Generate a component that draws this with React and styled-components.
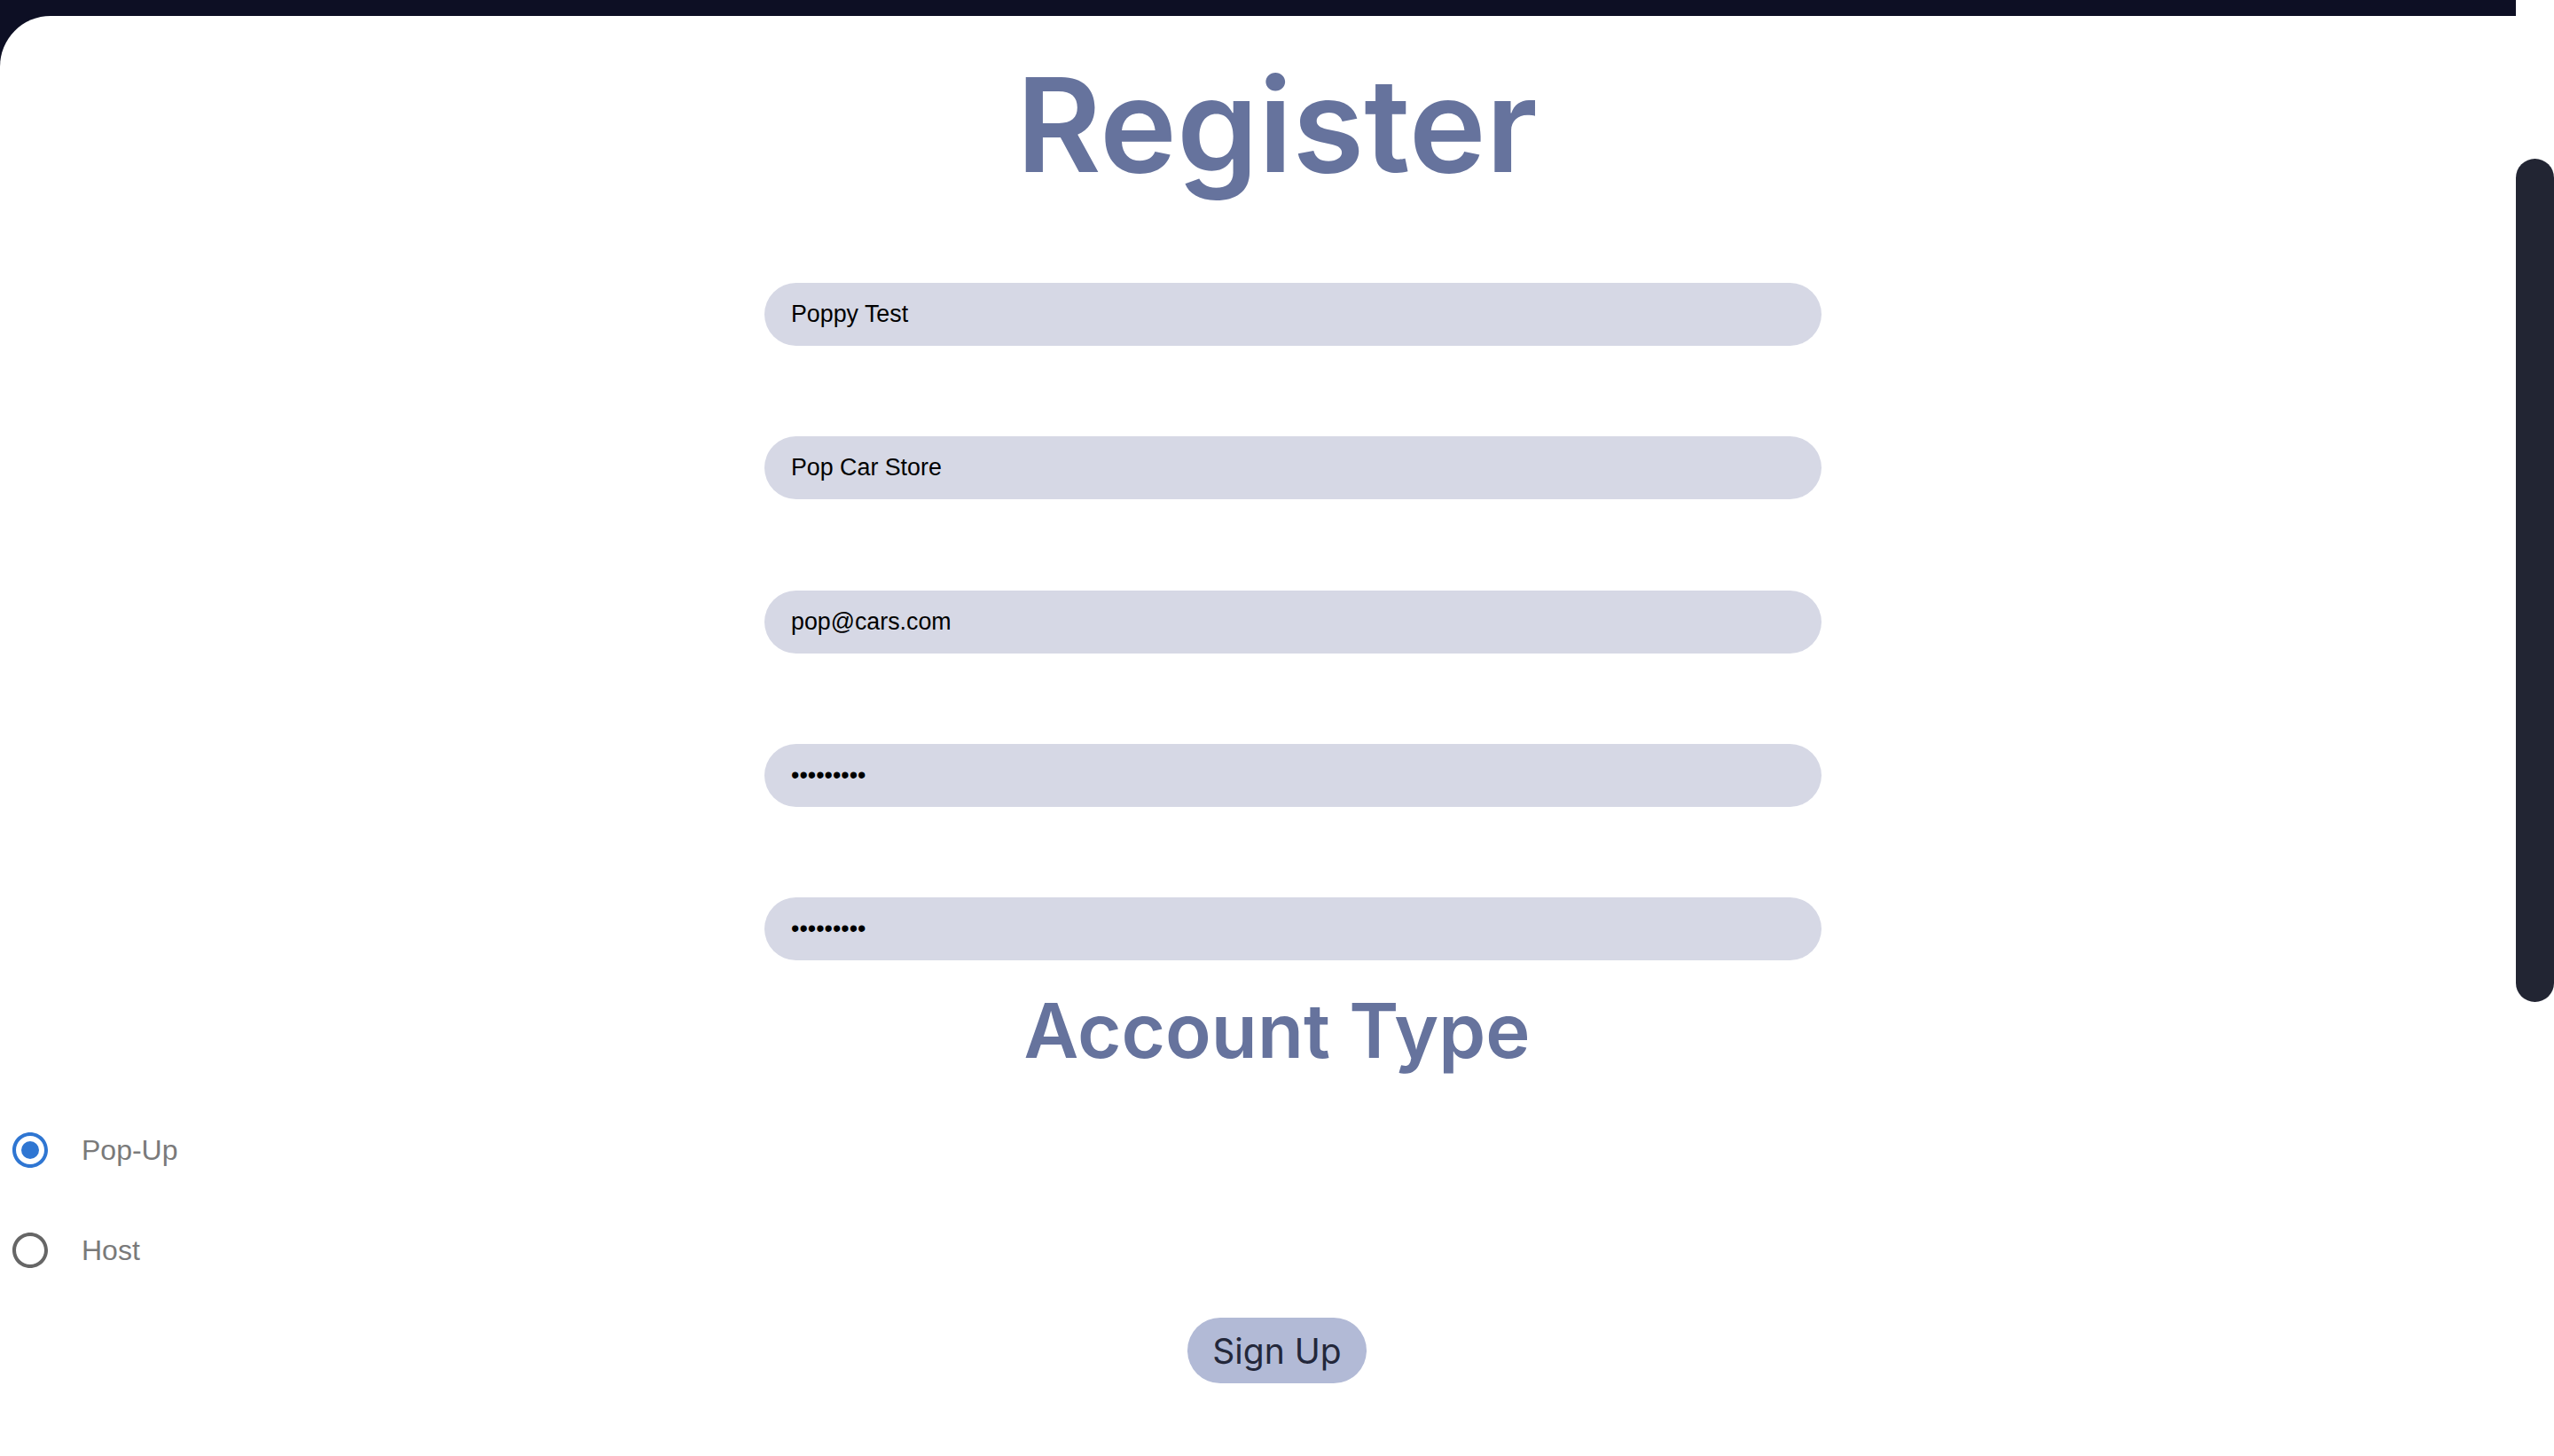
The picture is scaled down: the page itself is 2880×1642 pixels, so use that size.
import React, { useState } from 'react';
import styled, { createGlobalStyle } from 'styled-components';

const GlobalStyle = createGlobalStyle`
  html, body {
    margin: 0;
    padding: 0;
    background: #ffffff;
  }
  * {
    box-sizing: border-box;
  }
`;

const Register = () => {
  const [accountType, setAccountType] = useState('popup');

  return (
    <Frame>
      <GlobalStyle />
      <Main>
        <Card>
          <Title>Register</Title>

          <Form>
            <Field type="text" defaultValue="Poppy Test" />
            <Field type="text" defaultValue="Pop Car Store" />
            <Field type="email" defaultValue="pop@cars.com" />
            <Field type="password" defaultValue="password1" />
            <Field type="password" defaultValue="password1" />
          </Form>

          <Subtitle>Account Type</Subtitle>

          <RadioGroup>
            <RadioRow onClick={() => setAccountType('popup')}>
              <RadioIcon checked={accountType === 'popup'} />
              <RadioLabel>Pop-Up</RadioLabel>
            </RadioRow>
            <RadioRow onClick={() => setAccountType('host')}>
              <RadioIcon checked={accountType === 'host'} />
              <RadioLabel>Host</RadioLabel>
            </RadioRow>
          </RadioGroup>

          <SignUpButton>Sign Up</SignUpButton>
        </Card>
      </Main>

      <Rail>
        <Thumb />
      </Rail>
    </Frame>
  );
};

// material style radio icon
const RadioIcon = ({ checked }) => (
  <IconBox>
    <svg width="48" height="48" viewBox="0 0 24 24" fill={checked ? '#2f76d2' : '#666666'}>
      <path d="M12 2C6.48 2 2 6.48 2 12s4.48 10 10 10 10-4.48 10-10S17.52 2 12 2zm0 18c-4.42 0-8-3.58-8-8s3.58-8 8-8 8 3.58 8 8-3.58 8-8 8z" />
      {checked && <circle cx="12" cy="12" r="5" />}
    </svg>
  </IconBox>
);

export default Register;

// Styled Components
const Frame = styled.div`
  display: flex;
  width: 2880px;
  height: 1642px;
  background: #ffffff;
  overflow: hidden;
`;

const Main = styled.div`
  flex: 1;
  display: flex;
  flex-direction: column;
  background: #0d0f24;
`;

const Card = styled.div`
  flex: 1;
  margin-top: 18px;
  padding-left: 43px;
  display: flex;
  flex-direction: column;
  align-items: center;
  background: #ffffff;
  border-top-left-radius: 57px;
`;

const Title = styled.h1`
  margin: 50px 0 0 0;
  font-family: Inter, "Liberation Sans", sans-serif;
  font-size: 147px;
  line-height: 146px;
  font-weight: 600;
  color: #66739d;
`;

const Form = styled.div`
  display: flex;
  flex-direction: column;
  gap: 102.25px;
  width: 1192px;
  margin-top: 105px;
  margin-left: 36px;
`;

const Field = styled.input`
  height: 71px;
  width: 100%;
  padding: 0 30px;
  border: none;
  outline: none;
  border-radius: 36px;
  background: #d6d8e5;
  font-family: "Liberation Sans", Arial, sans-serif;
  font-size: 26.8px;
  color: #000000;
`;

const Subtitle = styled.h2`
  margin: 37px 0 0 0;
  font-family: Inter, "Liberation Sans", sans-serif;
  font-size: 85px;
  line-height: 85px;
  font-weight: 600;
  color: #66739d;
`;

const RadioGroup = styled.div`
  align-self: stretch;
  display: flex;
  flex-direction: column;
  gap: 29px;
  margin: 50px 0 0 -43px;
  padding-left: 10px;
`;

const RadioRow = styled.label`
  display: flex;
  align-items: center;
  height: 84px;
  cursor: pointer;
`;

const IconBox = styled.span`
  display: flex;
  align-items: center;
  justify-content: center;
  width: 48px;
  height: 48px;
`;

const RadioLabel = styled.span`
  margin-left: 34px;
  font-family: "Liberation Sans", Arial, sans-serif;
  font-size: 32px;
  color: #7a7a7a;
`;

const SignUpButton = styled.button`
  margin-top: 34px;
  width: 202px;
  height: 74px;
  border: none;
  border-radius: 37px;
  background: #b2bad6;
  font-family: Inter, "Liberation Sans", sans-serif;
  font-size: 39px;
  font-weight: 400;
  color: #23273a;
  cursor: pointer;
`;

const Rail = styled.div`
  width: 43px;
  background: #ffffff;
`;

const Thumb = styled.div`
  margin-top: 179px;
  height: 951px;
  border-radius: 22px;
  background: #222533;
`;
